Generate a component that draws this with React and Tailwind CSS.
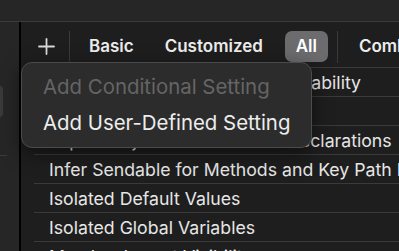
const ROWS = [
  'Global-Actor-Isolated Types Usability',
  'Implicitly Opened Existentials',
  'Import Objective-C Forward Declarations',
  'Infer Sendable for Methods and Key Path Literals',
  'Isolated Default Values',
  'Isolated Global Variables',
  'Member Import Visibility',
];

function Toolbar() {
  return (
    <div className="h-[46px] flex items-center shrink-0 whitespace-nowrap pt-[3px]">
      <div className="w-[48px] shrink-0 flex justify-center pl-[2px]">
        <svg width="17" height="17" viewBox="0 0 17 17" className="text-[#d8d8d8]">
          <path d="M8.5 1v15M1 8.5h15" stroke="currentColor" strokeWidth="1.8" strokeLinecap="round" />
        </svg>
      </div>
      <div className="w-px h-[32px] shrink-0 bg-[#3a3a3a]" />
      <span className="ml-[19px] shrink-0 font-semibold text-[#ececec]">Basic</span>
      <span className="ml-[31px] shrink-0 font-semibold text-[#ececec]">Customized</span>
      <span className="ml-[22px] shrink-0 h-[31px] w-[43px] rounded-[7px] bg-[#6c6c6e] flex items-center justify-center font-semibold text-white">All</span>
      <div className="ml-[9px] shrink-0 w-px h-[32px] bg-[#3a3a3a]" />
      <span className="ml-[21px] shrink-0 font-semibold text-[#ececec]">Combined</span>
    </div>
  );
}

export default function App() {
  return (
    <div
      className="relative w-[399px] h-[251px] overflow-hidden bg-[#1e1e1e] flex flex-col text-[17px]"
      style={{ fontFamily: 'Inter, "Liberation Sans", sans-serif' }}
    >
      <div className="h-[22px] shrink-0 bg-[#262626] border-b border-[#3b3b3b]" />
      <div className="flex flex-1 min-h-0">
        <div className="relative w-[21px] shrink-0 bg-[#262626] border-r-2 border-black">
          <div className="absolute left-[-10px] top-[63px] w-[13px] h-[33px] rounded-[5px] bg-[#3a3a3a]" />
          <div className="absolute left-0 top-[133px] w-[7px] h-px bg-[#3a3a3a]" />
        </div>
        <div className="flex-1 min-w-0 flex flex-col overflow-hidden">
          <Toolbar />
          <div className="flex flex-col pl-[13px] -mt-px">
            {ROWS.map((r) => (
              <div key={r} className="h-[29px] shrink-0 border-t border-[#3a3a3a] flex items-center pl-[15px] pt-[3px] text-[17.7px] text-[#e6e6e6] whitespace-nowrap">
                {r}
              </div>
            ))}
          </div>
        </div>
      </div>

      <div className="absolute left-[21px] top-[62px] w-[291px] h-[86px] rounded-[11px] bg-[#2c2c2c] border border-[#4b4b4b] shadow-[0_6px_20px_rgba(0,0,0,0.5)] flex flex-col pt-[6px] pl-[21px] text-[20.4px] whitespace-nowrap">
        <div className="h-[36px] flex items-center text-[#656565]">Add Conditional Setting</div>
        <div className="h-[36px] flex items-center text-[#ededed]">Add User-Defined Setting</div>
      </div>
    </div>
  );
}
